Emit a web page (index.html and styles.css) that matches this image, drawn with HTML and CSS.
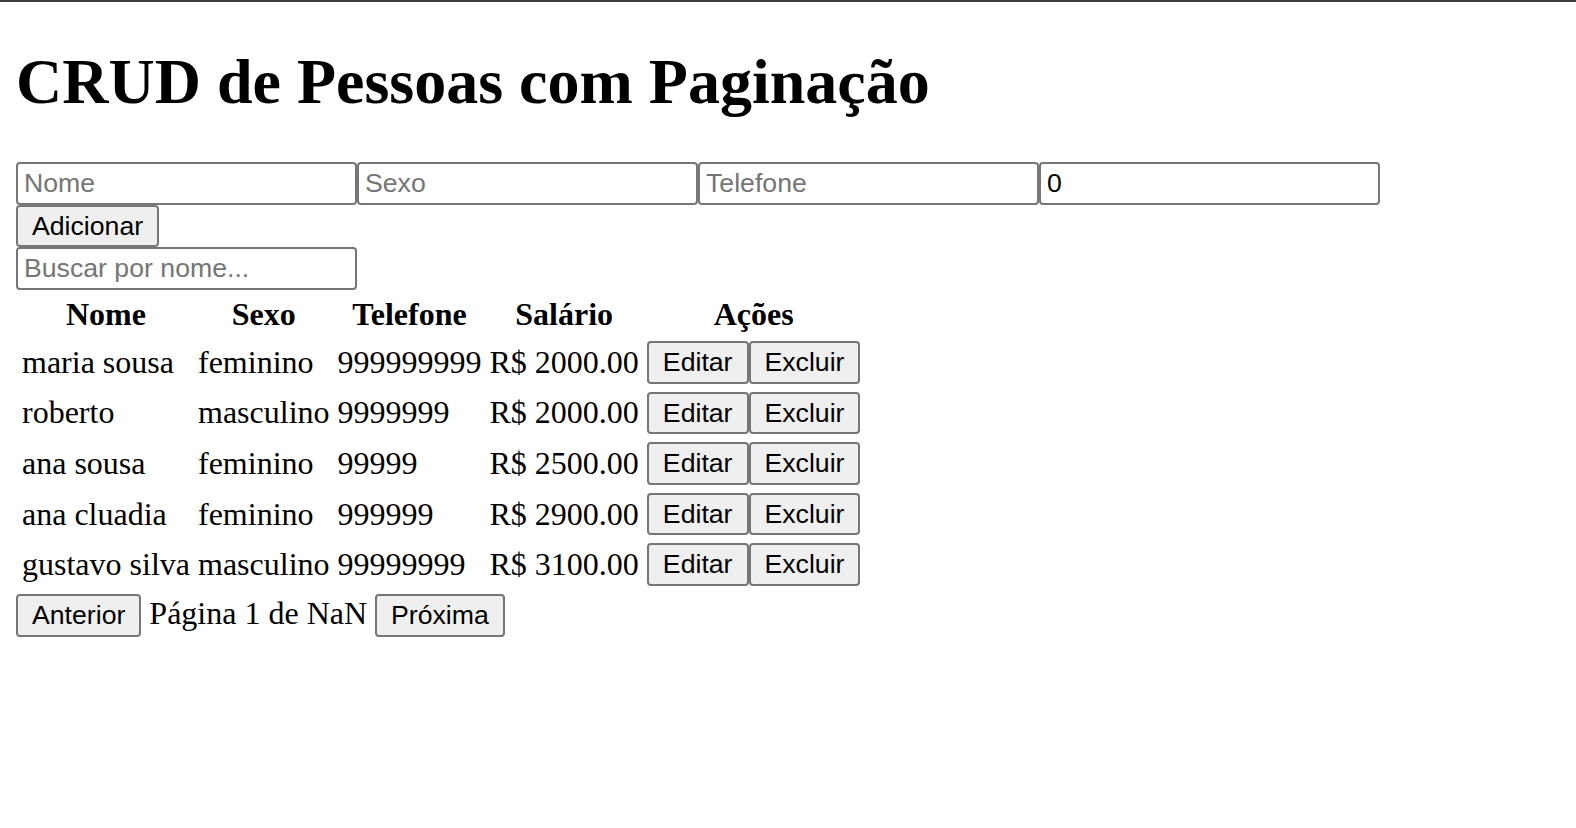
FILE: index.html
```html
<!DOCTYPE html>
<html lang="pt-BR">
<head>
<meta charset="utf-8">
<title>CRUD de Pessoas com Paginação</title>
<link rel="stylesheet" href="styles.css">
</head>
<body>
<div class="app">
<h1 class="title">CRUD de Pessoas com Paginação</h1>
<div class="form"><input class="field" type="text" placeholder="Nome"><input class="field" type="text" placeholder="Sexo"><input class="field" type="text" placeholder="Telefone"><input class="field" type="number" value="0"></div>
<div class="actions"><button class="btn">Adicionar</button></div>
<div class="search"><input class="field" type="text" placeholder="Buscar por nome..."></div>
<table class="people">
<thead>
<tr><th>Nome</th><th>Sexo</th><th>Telefone</th><th>Salário</th><th>Ações</th></tr>
</thead>
<tbody>
<tr><td>maria sousa</td><td>feminino</td><td>999999999</td><td>R$ 2000.00</td><td><button class="btn">Editar</button><button class="btn">Excluir</button></td></tr>
<tr><td>roberto</td><td>masculino</td><td>9999999</td><td>R$ 2000.00</td><td><button class="btn">Editar</button><button class="btn">Excluir</button></td></tr>
<tr><td>ana sousa</td><td>feminino</td><td>99999</td><td>R$ 2500.00</td><td><button class="btn">Editar</button><button class="btn">Excluir</button></td></tr>
<tr><td>ana cluadia</td><td>feminino</td><td>999999</td><td>R$ 2900.00</td><td><button class="btn">Editar</button><button class="btn">Excluir</button></td></tr>
<tr><td>gustavo silva</td><td>masculino</td><td>99999999</td><td>R$ 3100.00</td><td><button class="btn">Editar</button><button class="btn">Excluir</button></td></tr>
</tbody>
</table>
<div class="pager"><button class="btn">Anterior</button> <span class="page-info">Página 1 de NaN</span> <button class="btn">Próxima</button></div>
</div>
</body>
</html>
```

FILE: styles.css
```css
html {
  zoom: 2;
  border-top: 1px solid #3c3c3c;
}
body {
  margin: 8px;
  font-family: "Liberation Serif", "Times New Roman", serif;
  font-size: 16px;
  color: #000;
  background: #fff;
}
.title {
  font-size: 2em;
  font-weight: bold;
  margin: 13.5px 0 0.67em;
}
.field {
  font: 13.333px "Liberation Sans", Arial, sans-serif;
  width: 170.5px;
  box-sizing: border-box;
  height: 21.33px;
  padding: 2px 3px;
  border: 1px solid #767676;
  border-radius: 2px;
  margin: 0;
  background: #fff;
  color: #000;
}
.field::placeholder {
  color: #757575;
}
.btn {
  font: 13.333px "Liberation Sans", Arial, sans-serif;
  padding: 2px 7px;
  border: 1px solid #767676;
  border-radius: 2px;
  background: #efefef;
  color: #000;
  margin: 0;
  height: 21.33px;
  box-sizing: border-box;
}
.people {
  border-spacing: 2px;
}
.people th,
.people td {
  padding: 1px;
}
.pager {
  margin-top: 1px;
}
```
